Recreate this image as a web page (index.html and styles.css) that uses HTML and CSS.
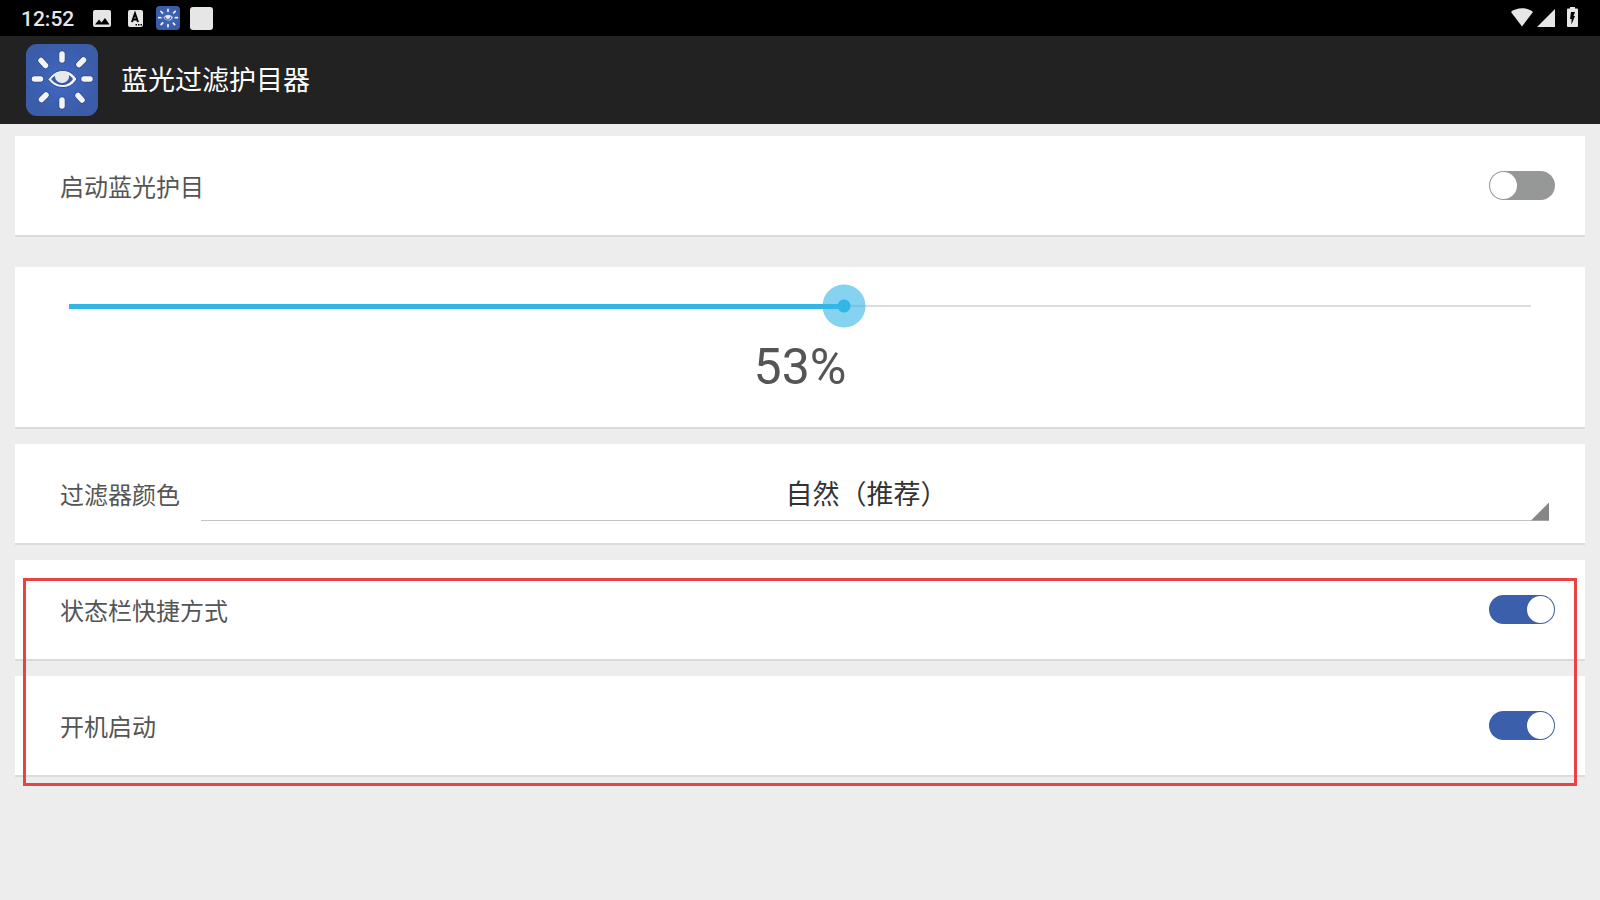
FILE: index.html
```
<!DOCTYPE html>
<html lang="zh-CN">
<head>
  <meta charset="UTF-8">
  <meta name="viewport" content="width=device-width, initial-scale=1">
  <title>蓝光过滤护目器</title>
  <link rel="stylesheet" href="styles.css">
</head>
<body>
  <!-- Shared drawing for the app logo -->
  <svg class="defs" aria-hidden="true">
    <defs>
      <radialGradient id="logo-bg">
        <stop offset="0" stop-color="#4068c4"/>
        <stop offset="1" stop-color="#3b5ca8"/>
      </radialGradient>
      <g id="rays">
        <path d="M36 10v6M36 56v6M8.500 35h6M58 35h6M15 16.500l4.500 5M57.500 16l-4.500 4.500M15.500 55.500l4.500-4.500M52 51.500l4 4.500"/>
      </g>
      <symbol id="logo" viewBox="0 0 72 72">
        <rect width="72" height="72" rx="11" fill="url(#logo-bg)"/>
        <use href="#rays" fill="none" stroke="#2b4a94" stroke-width="7" stroke-linecap="round"/>
        <use href="#rays" fill="none" stroke="#f4f4f4" stroke-width="5.500" stroke-linecap="round"/>
        <path d="M22 35.500C27 29 31 26.500 37 26.500c6 0 10 3 14 8.500-4 6-8 8.500-14 8.500-6 0-10-2-15-8z" fill="#f4f4f4" stroke="#2b4a94"/>
        <path d="M25 35c4-4 7-6 11-6 5 0 8 2 11 6-3 4-6 6-11 6-4 0-8-2-11-6z" fill="#3559ae"/>
        <path d="M29 29.500c4-2 10-2 14 0 1 5-2 9.500-7 9.500s-8-4.500-7-9.500z" fill="#e8e8e8"/>
      </symbol>
    </defs>
  </svg>

  <div class="status-bar">
    <span class="clock">12:52</span>
    <div class="notifications">
      <svg viewBox="0 0 24 24"><rect x="3" y="4" width="18" height="17" rx="2" fill="#e6e6e6"/><path fill="#000" d="M5 18.500l4-5 2.500 3 3.500-4.500 4.500 6.500z"/></svg>
      <svg viewBox="0 0 24 24"><rect x="5" y="4" width="15" height="17" rx="2" fill="#e6e6e6"/><path fill="none" stroke="#000" stroke-width="2" d="M9 16l3-8.500 3 8.500M10 13.500h4"/><path fill="#000" d="M12.500 18h1.500v1.500h-1.500zM15 18h1.500v1.500H15zM17.500 18H19v1.500h-1.500z"/></svg>
      <svg viewBox="0 0 24 24"><use href="#logo"/></svg>
      <svg viewBox="0 0 24 24"><rect x="1" y="1" width="23" height="23" rx="3" fill="#e6e6e6"/></svg>
    </div>
    <div class="system-icons">
      <svg viewBox="0 0 24 24"><path fill="#e6e6e6" d="M1 6c6-5 16-5 22 0L12 20.500z"/></svg>
      <svg viewBox="0 0 24 24"><path fill="#e6e6e6" d="M3 21L21 3v18z"/></svg>
      <svg viewBox="0 0 24 24"><path fill="#e6e6e6" d="M12 1h5v1.500h2a1 1 0 0 1 1 1V20a1 1 0 0 1-1 1h-9a1 1 0 0 1-1-1V3.500a1 1 0 0 1 1-1h2z"/><path fill="#000" d="M13 6h4l-1.500 4H17l-3.500 8.500V13H12z"/></svg>
    </div>
  </div>

  <header class="app-bar">
    <svg class="logo" viewBox="0 0 72 72"><use href="#logo"/></svg>
    <h1>蓝光过滤护目器</h1>
  </header>

  <main>
    <section class="card row">
      <label for="enable">启动蓝光护目</label>
      <input class="switch" type="checkbox" id="enable">
    </section>

    <section class="card level">
      <input type="range" id="level" min="0" max="100" value="53" aria-label="过滤强度" style="--value: 0.53">
      <output id="level-text" for="level">53%</output>
    </section>

    <section class="card row">
      <label for="color">过滤器颜色</label>
      <div class="spinner">
        <select id="color">
          <option>自然（推荐）</option>
        </select>
      </div>
    </section>

    <div class="highlight">
      <section class="card row">
        <label for="shortcut">状态栏快捷方式</label>
        <input class="switch" type="checkbox" id="shortcut" checked>
      </section>
      <section class="card row">
        <label for="boot">开机启动</label>
        <input class="switch" type="checkbox" id="boot" checked>
      </section>
    </div>
  </main>

  <script>
    // Keep the filled track and the percentage in step with the slider
    const level = document.getElementById('level');
    level.addEventListener('input', () => {
      level.style.setProperty('--value', level.value / 100);
      document.getElementById('level-text').textContent = level.value + '%';
    });
  </script>
</body>
</html>
```
FILE: styles.css
```
* {
  box-sizing: border-box;
}
body {
  margin: 0;
  min-height: 100vh;
  background: #ededed;
  color: #555;
  font-family: Roboto, "Noto Sans CJK SC", sans-serif;
  font-size: 24px;
}
.defs {
  position: absolute;
  width: 0;
  height: 0;
}

/* Status bar */
.status-bar {
  display: flex;
  align-items: center;
  height: 36px;
  padding: 0 18px 0 21px;
  background: #000;
}
.status-bar svg {
  display: block;
  width: 24px;
  height: 24px;
}
.clock {
  width: 69px;
  padding-top: 2px;
  color: #e6e6e6;
  font-size: 21px;
  font-weight: 500;
}
.notifications {
  display: flex;
  gap: 9px;
}
.system-icons {
  display: flex;
  margin-left: auto;
}

/* App bar */
.app-bar {
  display: flex;
  align-items: center;
  gap: 23px;
  height: 88px;
  padding: 0 26px;
  background: #222;
}
.logo {
  width: 72px;
  height: 72px;
}
.app-bar h1 {
  margin: 0;
  padding-bottom: 4px;
  color: #fff;
  font-size: 27px;
  font-weight: 400;
}

/* Cards */
main {
  padding: 12px 15px;
}
.card {
  margin-bottom: 15px;
  background: #fff;
  border-bottom: 2px solid #dbdbdb;
}
.row {
  display: flex;
  align-items: center;
  justify-content: space-between;
  min-height: 101px;
  padding: 0 30px 0 45px;
}

/* Switches */
.switch {
  appearance: none;
  display: flex;
  width: 66px;
  height: 29px;
  margin: 0;
  padding: 1px;
  border-radius: 15px;
  background: #969897;
  cursor: pointer;
}
.switch::before {
  content: "";
  width: 27px;
  height: 27px;
  border-radius: 50%;
  background: #fff;
}
.switch:checked {
  justify-content: flex-end;
  background: #3c5fab;
}

/* Slider */
.level {
  display: flex;
  flex-direction: column;
  align-items: center;
  margin-top: 30px;
  padding: 17px 32px 30px;
}
.level input {
  --fill: calc((100% - 44px) * var(--value));
  appearance: none;
  width: 100%;
  height: 44px;
  margin: 0 0 9px;
  background:
    linear-gradient(#33b5e5, #33b5e5) 22px 50% / var(--fill) 5px no-repeat,
    linear-gradient(#dcdcdc, #dcdcdc) 50% 50% / calc(100% - 44px) 2px no-repeat;
}
.level input::-webkit-slider-thumb {
  appearance: none;
  width: 44px;
  height: 44px;
  border-radius: 50%;
  background: radial-gradient(circle, #33b5e5 6px, #33b5e599 7px, #33b5e599 21px, transparent 22px);
}
.level output {
  font-size: 50px;
  line-height: 60px;
}

/* Drop-down */
.spinner {
  position: relative;
  flex: 1;
  margin: 0 6px 0 21px;
}
.spinner::after {
  content: "";
  position: absolute;
  right: 0;
  bottom: 0;
  width: 18px;
  height: 18px;
  background: #868686;
  clip-path: polygon(100% 0, 100% 100%, 0 100%);
  pointer-events: none;
}
.spinner select {
  appearance: none;
  display: block;
  width: 100%;
  height: 54px;
  padding: 4px 17px 0 0;
  border: 0;
  border-bottom: 1px solid #c4c4c4;
  border-radius: 0;
  background: none;
  color: #333;
  font: inherit;
  font-size: 27px;
  text-align: center;
  text-align-last: center;
}

/* Red frame round the last two settings */
.highlight {
  position: relative;
}
.highlight::after {
  content: "";
  position: absolute;
  top: 18px;
  right: 8px;
  bottom: -9px;
  left: 8px;
  border: 3px solid #e84343;
  pointer-events: none;
}
```
